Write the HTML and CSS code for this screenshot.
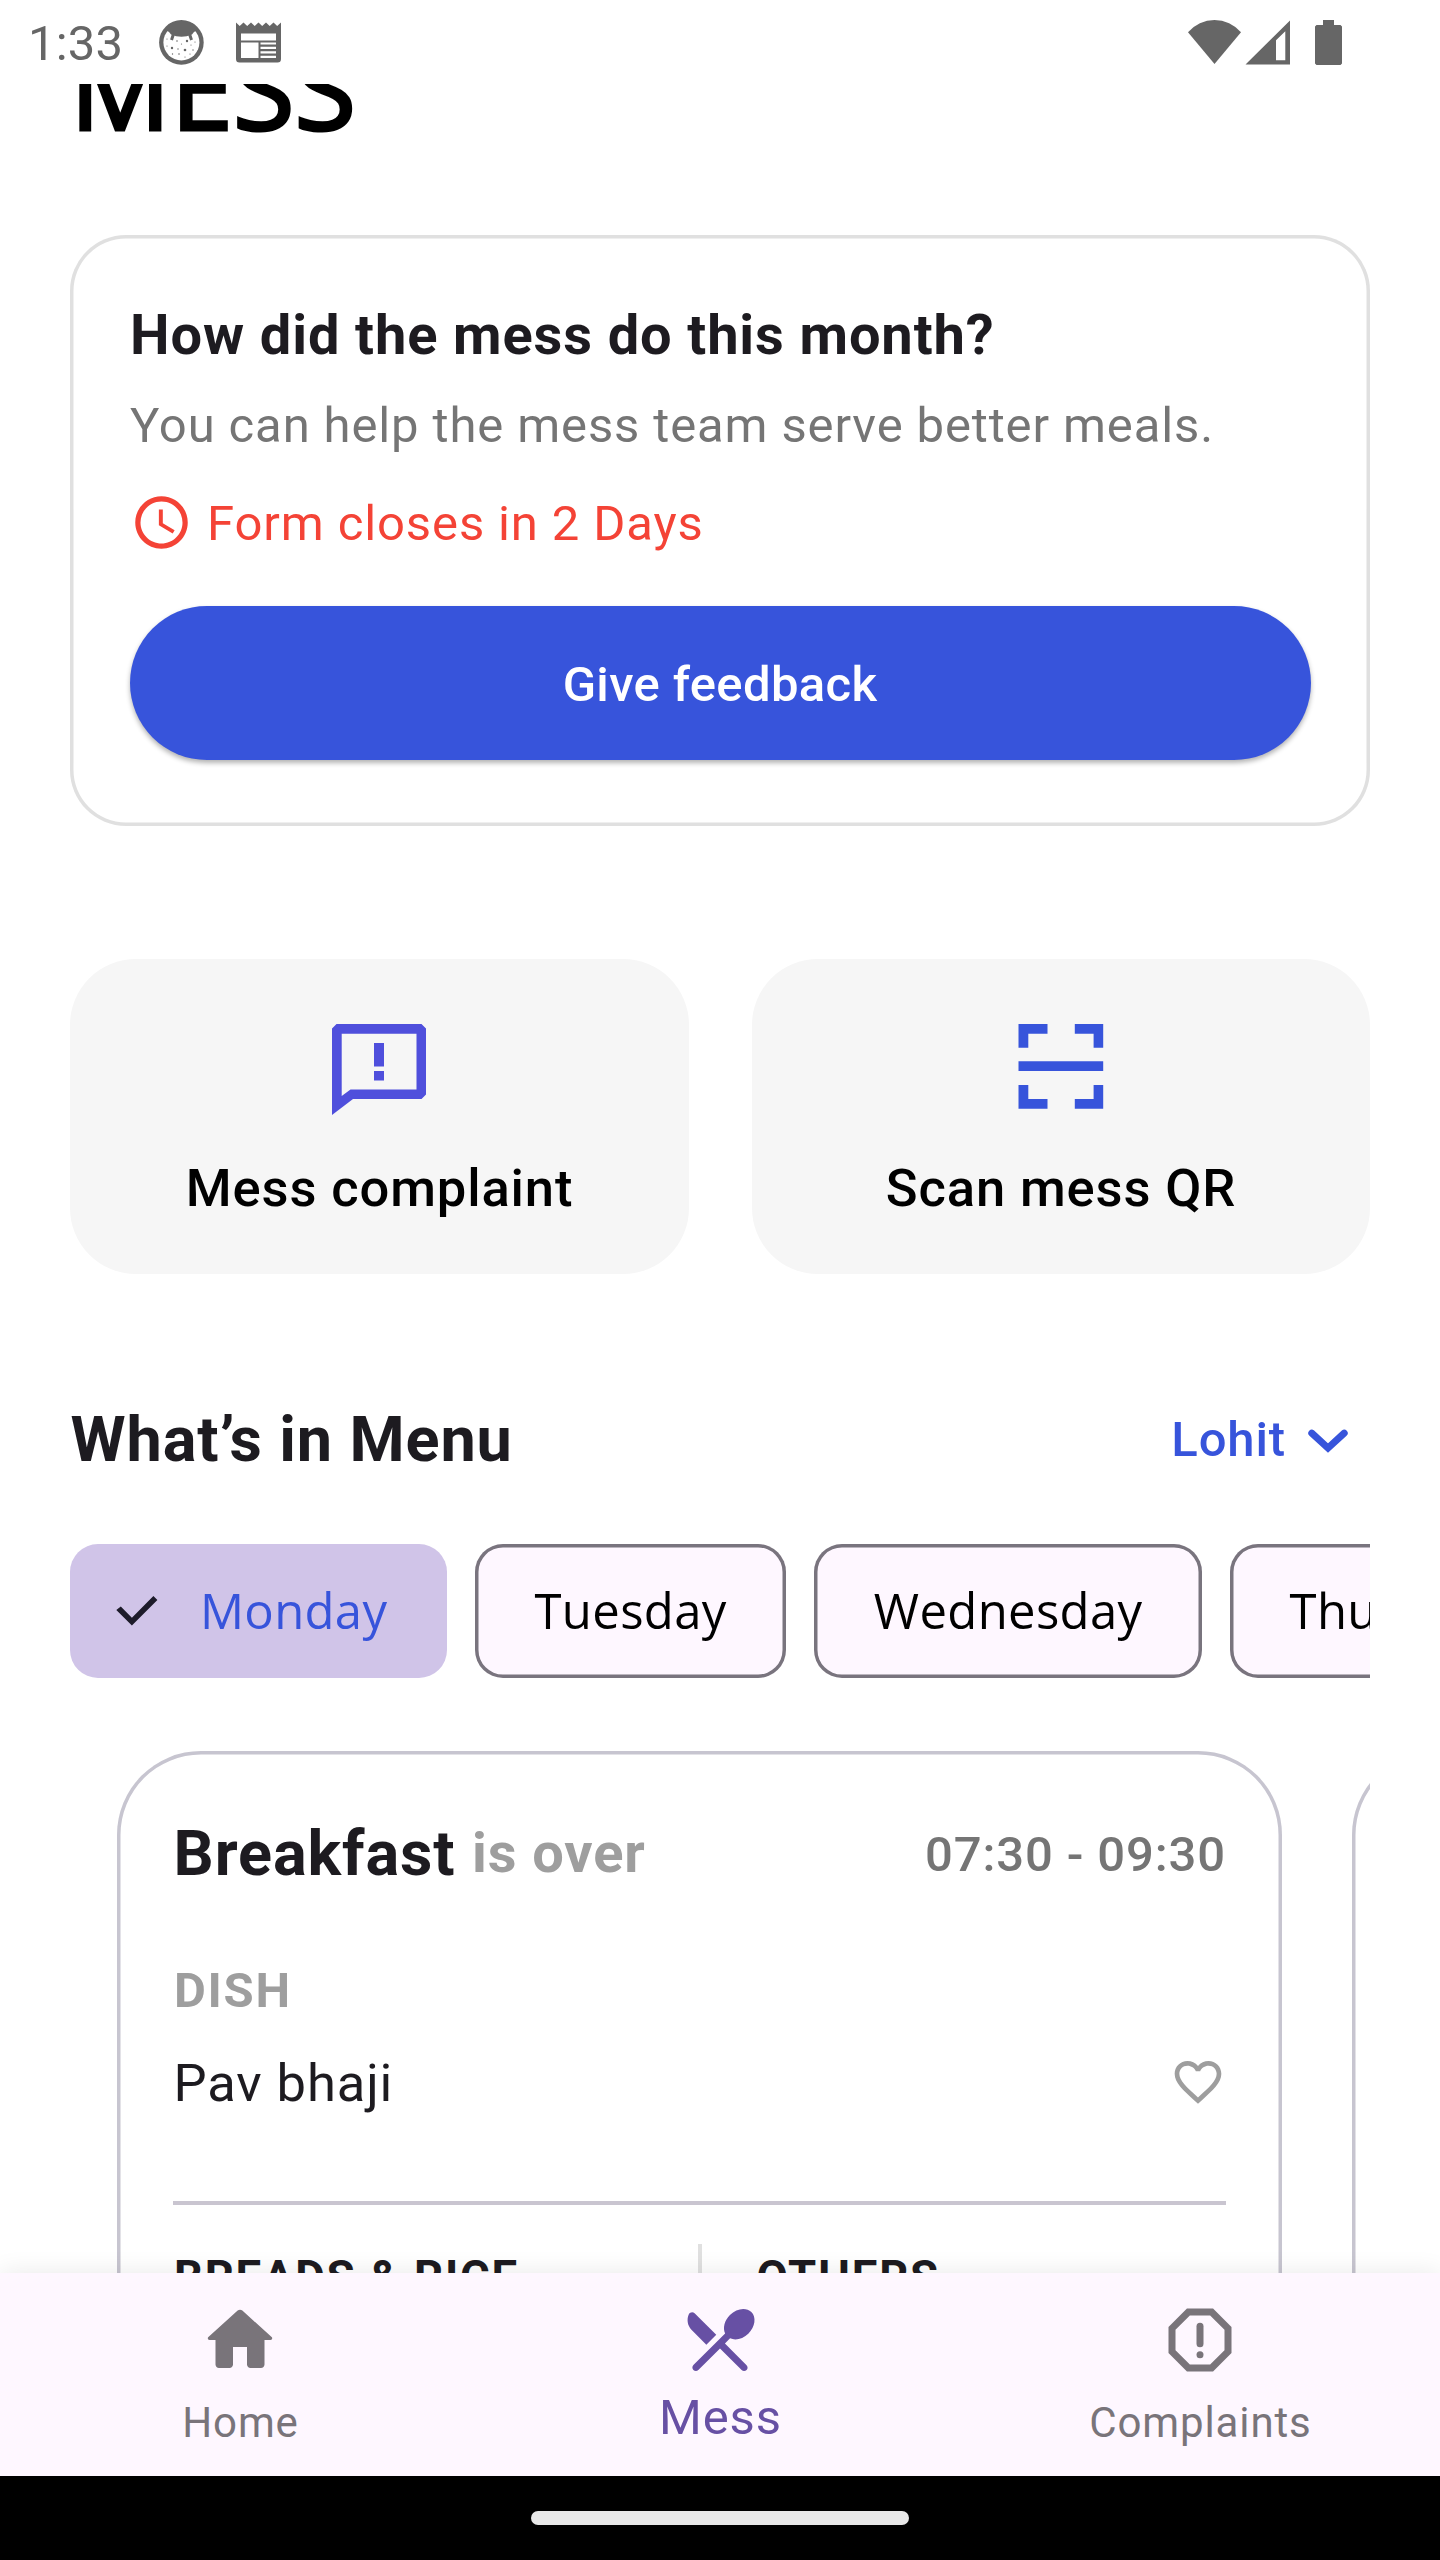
FILE: index.html
```html
<!DOCTYPE html>
<html lang="en">
<head>
<meta charset="utf-8">
<title>Mess</title>
<link rel="stylesheet" href="styles.css">
</head>
<body>
<div class="screen">
  <header class="status">
    <span class="status-time">1:33</span>
    <svg class="status-face" width="45" height="45" viewBox="0 0 45 45">
      <circle cx="22.4" cy="22.4" r="22.3" fill="#666"/>
      <circle cx="22.4" cy="22.4" r="18" fill="#fff"/>
      <path d="M5.500 9.500Q9.500 11 12 14.500Q22.400 19 33 14.500Q35.500 11 39.500 9.500L33 3H12Z" fill="#666"/>
      <path d="M14.500 14L12.500 20M30.500 14L32.500 20" stroke="#666" stroke-width="3"/>
      <g fill="#666">
        <circle cx="8" cy="19" r=".6"/><circle cx="18" cy="21" r=".8"/><circle cx="28" cy="21" r="1.200"/><circle cx="36" cy="22" r=".6"/>
        <circle cx="13" cy="28" r="1.200"/><circle cx="8" cy="26" r=".6"/><circle cx="22.500" cy="24" r=".6"/><circle cx="19" cy="29" r=".7"/>
        <circle cx="26" cy="30" r="1.300"/><circle cx="32" cy="25" r=".6"/><circle cx="34" cy="30" r=".7"/><circle cx="13.500" cy="34" r=".7"/>
        <circle cx="20" cy="34" r=".8"/><circle cx="26" cy="37" r=".6"/><circle cx="31" cy="34" r=".6"/>
      </g>
    </svg>
    <svg class="status-news" width="45" height="41" viewBox="0 0 45 41">
      <path d="M0 .5L3.700 4L7.500 .5L11.200 4L15 .5L18.700 4L22.500 .5L26.200 4L30 .5L33.700 4L37.500 .5L41.200 4L45 .5V37Q45 40.500 41.500 40.500H3.500Q0 40.500 0 37Z" fill="#666"/>
      <path d="M5 11.500H40V18.500H5ZM5 20.500H22.500V36H5ZM24.500 20.500H40V22.500H24.500ZM24.500 24.800H40V27H24.500ZM24.500 29.300H40V31.500H24.500ZM24.500 33.800H40V36H24.500Z" fill="#fff"/>
    </svg>
    <svg class="status-wifi" width="53" height="45" viewBox="0 0 53 45"><path d="M0 12.300A34.700 34.700 0 0 1 53 12.300L26.500 44Z" fill="#666"/></svg>
    <svg class="status-signal" width="45" height="45" viewBox="0 0 45 45"><path fill-rule="evenodd" d="M.5 44.500L45 .5V44.500ZM31 20.300V40.300H40.300V11.300Z" fill="#666"/></svg>
    <svg width="27" height="45" viewBox="0 0 27 45"><path d="M8 0H19V5H25.500L27 6.500V43.500L25.500 45H1.500L0 43.500V6.500L1.500 5H8Z" fill="#666"/></svg>
  </header>

  <main class="content">
    <h1 class="page-title">MESS</h1>

    <section class="feedback">
      <h2 class="feedback-title">How did the mess do this month?</h2>
      <p class="feedback-text">You can help the mess team serve better meals.</p>
      <div class="deadline">
        <svg width="63" height="63" viewBox="0 0 24 24" fill="currentColor"><path d="M11.990 2C6.470 2 2 6.480 2 12s4.470 10 9.990 10C17.520 22 22 17.520 22 12S17.520 2 11.990 2zM12 20c-4.420 0-8-3.580-8-8s3.580-8 8-8 8 3.580 8 8-3.580 8-8 8zm.5-13H11v6l5.250 3.150.75-1.230-4.500-2.670z"/></svg>
        <span>Form closes in 2 Days</span>
      </div>
      <button class="feedback-button">Give feedback</button>
    </section>

    <section class="actions">
      <div class="tile">
        <svg width="94" height="92" viewBox="0 0 94 92"><path fill-rule="evenodd" fill="#4F4FDC" d="M4.500 0H89.500L94 4.500V70.500L89.500 75H21L0 91V4.500ZM9.700 9.700V72L18.500 65.600H84.500V9.700ZM42 19H52V42.500H42ZM42 47H52V56.500H42Z"/></svg>
        <span>Mess complaint</span>
      </div>
      <div class="tile">
        <svg width="94" height="92" viewBox="0 0 94 92"><path fill="#3754DB" d="M4.500 0H33.500V9.700H14.300V23.700H4.500ZM60.800 0H89.200V23.700H79.600V9.700H60.800ZM4.500 37.300H89.200V47H4.500ZM4.500 61H14.300V75H33.500V84.700H4.500ZM79.600 61H89.200V84.700H60.800V75H79.600Z"/></svg>
        <span>Scan mess QR</span>
      </div>
    </section>

    <section class="menu-head">
      <h2 class="menu-title">What’s in Menu</h2>
      <div class="hostel">
        <span>Lohit</span>
        <svg width="40" height="24" viewBox="0 0 40 24" fill="none" stroke="currentColor" stroke-width="7" stroke-linecap="round"><path d="M3.800 4.200L20 19L36.200 4.200"/></svg>
      </div>
    </section>

    <div class="chips">
      <div class="chip chip-selected">
        <svg width="70" height="70" viewBox="0 0 70 70"><path d="M14.300 34.100L18.800 30.400L29.900 41.800L51.400 20.100L55.400 24.100L29.900 49.500Z" fill="#1D1B2A"/></svg>
        <span>Monday</span>
      </div>
      <div class="chip"><span>Tuesday</span></div>
      <div class="chip"><span>Wednesday</span></div>
      <div class="chip"><span>Thursday</span></div>
    </div>

    <div class="meals">
      <article class="meal">
        <div class="meal-head">
          <span class="meal-name">Breakfast</span>
          <span class="meal-state">is over</span>
          <span class="meal-time">07:30 - 09:30</span>
        </div>
        <div class="dish-label">DISH</div>
        <div class="dish">
          <span>Pav bhaji</span>
          <svg width="56" height="56" viewBox="0 0 24 24" fill="#9E9E9E"><path d="M16.500 3c-1.740 0-3.410.81-4.500 2.090C10.910 3.810 9.240 3 7.500 3 4.420 3 2 5.420 2 8.500c0 3.780 3.400 6.860 8.550 11.540L12 21.350l1.450-1.320C18.600 15.360 22 12.280 22 8.500 22 5.420 19.580 3 16.500 3zm-4.400 15.550l-.1.1-.1-.1C7.140 14.240 4 11.390 4 8.500 4 6.500 5.500 5 7.500 5c1.540 0 3.040.99 3.570 2.360h1.870C13.460 5.990 14.960 5 16.500 5c2 0 3.500 1.500 3.500 3.500 0 2.890-3.140 5.740-7.900 10.050z"/></svg>
        </div>
        <div class="meal-rule"></div>
        <div class="extras">
          <div class="extra">BREADS &amp; RICE</div>
          <div class="extra extra-split">OTHERS</div>
        </div>
      </article>
      <article class="meal"></article>
    </div>
  </main>

  <nav class="tabs">
    <div class="tab">
      <svg width="84" height="84" viewBox="0 0 24 24" fill="currentColor"><path d="M10 19v-5h4v5c0 .55.45 1 1 1h3c.55 0 1-.45 1-1v-7h1.700c.46 0 .68-.57.33-.87L12.670 3.600c-.38-.34-.96-.34-1.340 0l-8.360 7.530c-.34.3-.13.87.33.87H5v7c0 .55.45 1 1 1h3c.55 0 1-.45 1-1z"/></svg>
      <span>Home</span>
    </div>
    <div class="tab tab-active">
      <svg width="84" height="84" viewBox="0 0 24 24" fill="currentColor"><path d="M8.100 13.340l2.830-2.830-6.190-6.180c-.48-.48-1.310-.35-1.610.27-.71 1.490-.45 3.320.78 4.560l4.190 4.180zM14.880 11.530c1.530.71 3.680.21 5.270-1.380 1.910-1.910 2.280-4.650.81-6.120-1.460-1.460-4.200-1.100-6.120.81-1.590 1.590-2.090 3.740-1.380 5.270L4.400 19.170c-.39.39-.39 1.020 0 1.410.39.39 1.020.39 1.410 0L12 14.410l6.180 6.180c.39.39 1.020.39 1.410 0 .39-.39.39-1.020 0-1.410L13.410 13z"/></svg>
      <span>Mess</span>
    </div>
    <div class="tab">
      <svg width="84" height="84" viewBox="0 0 24 24" fill="currentColor"><path d="M15.730 3H8.270L3 8.270v7.460L8.270 21h7.460L21 15.730V8.270L15.730 3zM19 14.900L14.900 19H9.100L5 14.900V9.100L9.100 5h5.800L19 9.100v5.800z"/><circle cx="12" cy="16.200" r="1"/><rect x="11" y="7.100" width="2" height="7" rx="1"/></svg>
      <span>Complaints</span>
    </div>
  </nav>

  <footer class="gesture"><div class="gesture-pill"></div></footer>
</div>
</body>
</html>
```
FILE: styles.css
```css
* {
  box-sizing: border-box;
}

body {
  margin: 0;
  background: #fff;
  font-family: Roboto, sans-serif;
  letter-spacing: 0.875px;
  text-indent: 0.6px;
}

h1, h2, p {
  margin: 0;
}

svg {
  display: block;
  flex: none;
}

.screen {
  width: 1440px;
  height: 2560px;
  overflow: hidden;
  display: flex;
  flex-direction: column;
}

/* Status bar */
.status {
  flex: none;
  height: 84px;
  padding: 0 98px 0 28px;
  display: flex;
  align-items: center;
}

.status-time {
  width: 131px;
  padding-top: 4px;
  font-size: 49px;
  line-height: 58px;
  letter-spacing: 0.2px;
  text-indent: 0;
  color: #666;
}

.status-news {
  margin-left: 32px;
}

.status-wifi {
  margin-left: auto;
  margin-right: 4px;
}

.status-signal {
  margin-right: 25px;
}

/* Scrolling page, scrolled part-way under the status bar */
.content {
  flex: none;
  height: 2189px;
  padding: 0 70px;
  overflow: hidden;
}

.page-title {
  margin-top: -53px;
  font: 400 112px/112px "Open Sans", "Noto Sans", sans-serif;
  -webkit-text-stroke: 3.2px #000;
  letter-spacing: 0;
  text-indent: 0;
  color: #000;
}

.feedback {
  height: 591px;
  margin-top: 92px;
  padding: 67px 59.5px 0;
  border-radius: 56px;
  box-shadow: inset 0 0 0 3.5px #e0e0e0;
}

.feedback-title {
  font-size: 56px;
  line-height: 66px;
  font-weight: 700;
  color: #1d1b20;
}

.feedback-text {
  margin-top: 29px;
  font-size: 49px;
  line-height: 58px;
  color: #757575;
}

.deadline {
  display: flex;
  align-items: center;
  gap: 14px;
  margin-top: 36px;
  font-size: 49px;
  line-height: 58px;
  color: #f44336;
}

.deadline span {
  padding-top: 2px;
}

.feedback-button {
  display: block;
  width: 100%;
  height: 154px;
  margin-top: 52px;
  padding: 3px 0 0;
  border: 0;
  border-radius: 77px;
  background: #3754db;
  box-shadow: 0 3px 5px rgba(0, 0, 0, 0.3);
  font: 500 49px/58px Roboto, sans-serif;
  letter-spacing: 0.35px;
  color: #fff;
}

.actions {
  display: grid;
  grid-template-columns: 1fr 1fr;
  gap: 63px;
  margin-top: 133px;
}

.tile {
  height: 315px;
  padding-top: 65px;
  border-radius: 66px;
  background: #f6f6f6;
  display: flex;
  flex-direction: column;
  align-items: center;
  gap: 42px;
  font-size: 52.5px;
  line-height: 60px;
  font-weight: 500;
  color: #000;
}

.menu-head {
  display: flex;
  justify-content: space-between;
  margin-top: 129px;
}

.menu-title {
  font-size: 63px;
  line-height: 74px;
  font-weight: 700;
  color: #1d1b20;
}

.hostel {
  display: flex;
  align-items: center;
  gap: 22px;
  height: 73px;
  padding-right: 22px;
  font-size: 49px;
  line-height: 58px;
  font-weight: 500;
  color: #3754db;
}

.hostel svg {
  margin-top: 3px;
}

.chips {
  display: flex;
  gap: 28px;
  margin-top: 67px;
  overflow: hidden;
}

.chip {
  flex: none;
  display: flex;
  align-items: center;
  gap: 28px;
  height: 134px;
  padding: 0 59.3px 0 59.5px;
  border-radius: 28px;
  background: #fef7ff;
  box-shadow: inset 0 0 0 3.5px #79747e;
  font: 400 49px/66px "Open Sans", "Noto Sans", sans-serif;
  letter-spacing: 0.35px;
  text-indent: 0.4px;
  color: #000;
}

.chip span {
  padding-bottom: 2px;
}

.chip-selected {
  padding-left: 31.5px;
  background: #d0c4e8;
  box-shadow: none;
  color: #3754db;
}

.meals {
  display: flex;
  gap: 70px;
  margin-top: 73px;
  padding-left: 47px;
  overflow: hidden;
}

.meal {
  flex: none;
  width: 1165px;
  height: 900px;
  padding: 65px 56px 0;
  border-radius: 84px;
  box-shadow: inset 0 0 0 3.5px #c7c5d0;
}

.meal-head {
  display: flex;
  align-items: center;
  line-height: 74px;
}

.meal-name {
  font-size: 63px;
  font-weight: 700;
  color: #1d1b20;
}

.meal-state {
  margin-left: 16px;
  padding-bottom: 2px;
  font-size: 56px;
  font-weight: 700;
  color: #9e9e9e;
}

.meal-time {
  margin-left: auto;
  padding-top: 1px;
  font-size: 49px;
  font-weight: 500;
  color: #757575;
}

.dish-label {
  margin-top: 70px;
  font-size: 49px;
  line-height: 58px;
  font-weight: 700;
  letter-spacing: 1.75px;
  text-indent: 0.9px;
  color: #9e9e9e;
}

.dish {
  display: flex;
  align-items: center;
  justify-content: space-between;
  height: 56px;
  margin-top: 34px;
  font-size: 52.5px;
  line-height: 60px;
  color: #1d1b20;
}

.dish span {
  padding-top: 2px;
}

.meal-rule {
  height: 4px;
  margin-top: 91px;
  background: #c9c5d0;
}

.extras {
  display: grid;
  grid-template-columns: 1fr 1fr;
  height: 300px;
  margin-top: 39px;
  font-size: 45.5px;
  line-height: 54px;
  font-weight: 700;
  letter-spacing: 1.75px;
  text-indent: 0.9px;
  color: #1d1b20;
}

.extra {
  padding-top: 7px;
}

.extra-split {
  margin-left: -2px;
  padding-left: 54px;
  border-left: 4px solid #e0e0e0;
}

/* Bottom tabs */
.tabs {
  position: relative;
  flex: none;
  display: grid;
  grid-template-columns: repeat(3, 1fr);
  height: 203px;
  padding-top: 25px;
  background: #fef7ff;
  box-shadow: 0 0 24px rgba(0, 0, 0, 0.09);
}

.tab {
  display: flex;
  flex-direction: column;
  align-items: center;
  gap: 16px;
  font-size: 42px;
  line-height: 50px;
  text-indent: 1px;
  color: #79747a;
}

.tab-active {
  gap: 7px;
  font-size: 49px;
  line-height: 58px;
  color: #6750a4;
}

/* System gesture bar */
.gesture {
  position: relative;
  flex: none;
  height: 84px;
  padding-top: 35px;
  background: #000;
}

.gesture-pill {
  width: 378px;
  height: 14px;
  margin: 0 auto;
  border-radius: 7px;
  background: #e9e9e9;
}
```
